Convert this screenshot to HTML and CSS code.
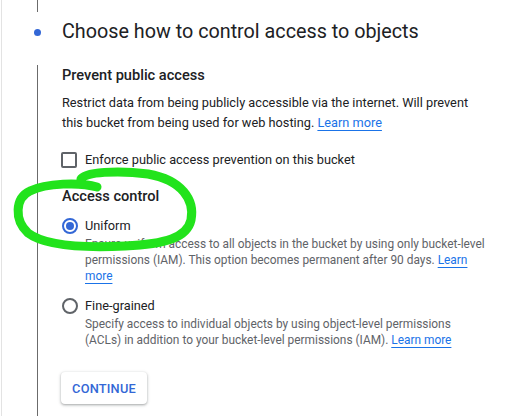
FILE: index.html
```html
<!DOCTYPE html>
<html>
<head>
<meta charset="utf-8">
<link rel="stylesheet" href="styles.css">
</head>
<body>
<div class="frame">
  <div class="step-head">
    <div class="rail">
      <div class="seg-top"></div>
      <div class="dot"></div>
    </div>
    <h1 class="title">Choose how to control access to objects</h1>
  </div>
  <div class="step-body">
    <h2 class="section-title">Prevent public access</h2>
    <p class="para">Restrict data from being publicly accessible via the internet. Will prevent this bucket from being used for web hosting. <a class="link" href="#">Learn more</a></p>
    <label class="check-row">
      <span class="checkbox"></span>
      <span class="check-label">Enforce public access prevention on this bucket</span>
    </label>
    <h2 class="section-title access">Access control</h2>
    <div class="option">
      <div class="opt-row">
        <span class="radio checked"></span>
        <span class="opt-label">Uniform</span>
      </div>
      <p class="opt-desc">Ensure uniform access to all objects in the bucket by using only bucket-level<br>permissions (IAM). This option becomes permanent after 90 days. <a class="link" href="#">Learn<br>more</a></p>
    </div>
    <div class="option second">
      <div class="opt-row">
        <span class="radio"></span>
        <span class="opt-label">Fine-grained</span>
      </div>
      <p class="opt-desc">Specify access to individual objects by using object-level permissions<br>(ACLs) in addition to your bucket-level permissions (IAM). <a class="link" href="#">Learn more</a></p>
    </div>
    <button class="btn">CONTINUE</button>
  </div>
</div>
<svg class="scribble" width="531" height="416" viewBox="0 0 531 416">
  <path d="M81,179 C84,172 118,170 148,174 C182,180 195,200 191,220 C187,238 165,244 125,246 C85,248 45,246 28,233 C14,220 15,198 30,191 C46,183 80,182 97,187" fill="none" stroke="#22e31c" stroke-width="9" stroke-linecap="round" stroke-linejoin="round"/>
</svg>
</body>
</html>
```
FILE: styles.css
```css
html, body {
  margin: 0;
  padding: 0;
  background: #ffffff;
}
body {
  font-family: Roboto, "Liberation Sans", Arial, sans-serif;
  color: #202124;
  width: 531px;
  height: 416px;
  overflow: hidden;
  position: relative;
}
.frame {
  margin-left: 1px;
  border-left: 1px solid #e3e3e3;
  padding-left: 32px;
  height: 416px;
  box-sizing: border-box;
}
.step-head {
  display: flex;
  height: 65px;
}
.rail {
  width: 28px;
  flex: none;
  display: flex;
  flex-direction: column;
}
.seg-top {
  width: 1px;
  height: 12px;
  margin-left: 3px;
  background: #6b6b6b;
}
.dot {
  width: 7px;
  height: 7px;
  border-radius: 50%;
  background: #3367d6;
  margin-top: 17px;
}
.title {
  margin: 19px 0 0 0;
  font-size: 19.75px;
  line-height: 26px;
  font-weight: 400;
  color: #202124;
  white-space: nowrap;
}
.step-body {
  margin-left: 3px;
  border-left: 1px solid #6b6b6b;
  padding-left: 24px;
  height: 351px;
  box-sizing: border-box;
}
.section-title {
  margin: 0;
  font-size: 14.6px;
  line-height: 20px;
  font-weight: 500;
  color: #202124;
}
.para {
  margin: 8px 0 0 0;
  font-size: 12.75px;
  line-height: 20px;
  color: #202124;
  width: 420px;
}
.link {
  color: #1a73e8;
  text-decoration: underline;
  text-underline-offset: 3px;
  text-decoration-thickness: 1px;
}
.check-row {
  display: flex;
  align-items: center;
  margin-top: 17px;
  height: 20px;
}
.checkbox {
  width: 12px;
  height: 12px;
  border: 2px solid #5f6368;
  border-radius: 2px;
  margin-left: -1px;
  margin-right: 8px;
  flex: none;
}
.check-label {
  font-size: 12.75px;
  line-height: 20px;
}
.access {
  margin-top: 16px;
}
.option {
  margin-top: 10px;
}
.option.second {
  margin-top: 12px;
}
.opt-row {
  display: flex;
  align-items: center;
  height: 20px;
}
.radio {
  width: 12px;
  height: 12px;
  border: 2px solid #5f6368;
  border-radius: 50%;
  margin-right: 7px;
  flex: none;
  position: relative;
}
.radio.checked {
  border-color: #3367d6;
}
.radio.checked::after {
  content: "";
  position: absolute;
  left: 2px;
  top: 2px;
  width: 8px;
  height: 8px;
  border-radius: 50%;
  background: #3367d6;
}
.opt-label {
  font-size: 12.75px;
  line-height: 20px;
}
.opt-desc {
  margin: 0 0 0 23px;
  font-size: 11.9px;
  line-height: 16px;
  color: #5f6368;
  width: 430px;
  white-space: nowrap;
}
.btn {
  display: block;
  margin-top: 24px;
  margin-left: -1px;
  height: 32px;
  width: 86px;
  padding: 0;
  border: none;
  border-radius: 4px;
  background: #ffffff;
  box-shadow: 0 1px 2px rgba(60,64,67,0.3), 0 1px 3px 1px rgba(60,64,67,0.15);
  font-family: Roboto, "Liberation Sans", Arial, sans-serif;
  font-size: 12.8px;
  font-weight: 500;
  color: #3367d6;
  letter-spacing: 0.2px;
}
.scribble {
  position: absolute;
  left: 0;
  top: 0;
  pointer-events: none;
}
```
